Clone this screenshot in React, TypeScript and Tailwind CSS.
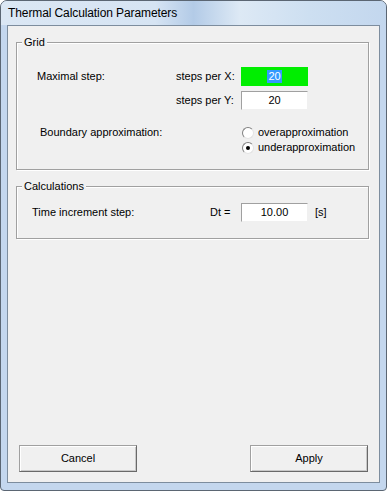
import React from "react";

function TextBox({ value, selected }: { value: string; selected?: boolean }) {
  if (selected) {
    return (
      <div className="w-[67px] h-[19px] bg-[#00ee00] flex items-center justify-center">
        <span className="bg-[#3399ff] text-white leading-[13px] px-[1px]">{value}</span>
      </div>
    );
  }
  return (
    <div className="w-[67px] h-[19px] bg-white border-t border-l border-t-[#a0a0a0] border-l-[#a0a0a0] border-b border-r border-b-[#f0f0f0] border-r-[#f0f0f0] flex items-center justify-center">
      <span className="leading-[13px]">{value}</span>
    </div>
  );
}

function Radio({ checked, label }: { checked?: boolean; label: string }) {
  return (
    <div className="h-[15px] flex items-center">
      <div className="w-[12px] h-[12px] rounded-full bg-white border border-t-[#808080] border-l-[#808080] border-b-[#e3e3e3] border-r-[#e3e3e3] flex items-center justify-center">
        {checked && <div className="w-[4px] h-[4px] rounded-full bg-black" />}
      </div>
      <span className="ml-[4px]">{label}</span>
    </div>
  );
}

function GroupBox({ title, className, children }: { title: string; className: string; children: React.ReactNode }) {
  return (
    <div className={"relative ml-[8px] w-[353px] border border-[#a0a0a0] shadow-[1px_1px_0_#fff,inset_1px_1px_0_#fff] " + className}>
      <span className="absolute -top-[8px] left-[5px] px-[2px] bg-[#f0f0f0] leading-[14px]">{title}</span>
      {children}
    </div>
  );
}

function Button({ label }: { label: string }) {
  return (
    <button className="w-[118px] h-[27px] bg-[#f0f0f0] border border-[#a0a0a0] border-b-[#696969] border-r-[#696969] shadow-[inset_1px_1px_0_#fff,inset_-1px_-1px_0_#c8c8c8] text-[11px] text-black">
      {label}
    </button>
  );
}

export default function App() {
  return (
    <div className="w-[387px] h-[491px] flex flex-col rounded-t-[7px] rounded-b-[4px] border border-[#5b6673] bg-[#c4d7ee] font-['Liberation_Sans',Arial,sans-serif] text-black">
      {/* Title bar */}
      <div className="h-[24px] flex items-center pl-[7px] rounded-t-[6px] bg-[linear-gradient(90deg,#dbe7f4_0%,#d6e4f3_40%,#b3cbe7_50%,#dde9f5_62%,#cddff1_80%,#c3d7ee_100%)]">
        <span className="text-[12px] leading-[14px] tracking-[-0.1px]">Thermal Calculation Parameters</span>
      </div>

      {/* Client area */}
      <div className="flex-1 mx-[6px] mb-[7px] border border-[#7d8d9e] bg-[#f0f0f0] flex flex-col text-[11px]">
        <GroupBox title="Grid" className="mt-[16px] h-[128px]">
          <div className="pt-[24px] flex flex-col gap-[5px]">
            <div className="flex items-center pl-[20px]">
              <span className="w-[139px]">Maximal step:</span>
              <span className="w-[65px]">steps per X:</span>
              <TextBox value="20" selected />
            </div>
            <div className="flex items-center pl-[20px]">
              <span className="w-[139px]" />
              <span className="w-[65px]">steps per Y:</span>
              <TextBox value="20" />
            </div>
          </div>
          <div className="mt-[15px] flex pl-[23px]">
            <span className="w-[202px] h-[15px] flex items-center">Boundary approximation:</span>
            <div className="flex flex-col">
              <Radio label="overapproximation" />
              <Radio label="underapproximation" checked />
            </div>
          </div>
        </GroupBox>

        <GroupBox title="Calculations" className="mt-[16px] h-[53px]">
          <div className="pt-[16px] flex items-center pl-[15px]">
            <span className="w-[178px]">Time increment step:</span>
            <span className="w-[31px]">Dt =</span>
            <TextBox value="10.00" />
            <span className="ml-[7px]">[s]</span>
          </div>
        </GroupBox>

        <div className="flex-1" />

        <div className="flex justify-between pl-[11px] pr-[11px] pb-[10px]">
          <Button label="Cancel" />
          <Button label="Apply" />
        </div>
      </div>
    </div>
  );
}
